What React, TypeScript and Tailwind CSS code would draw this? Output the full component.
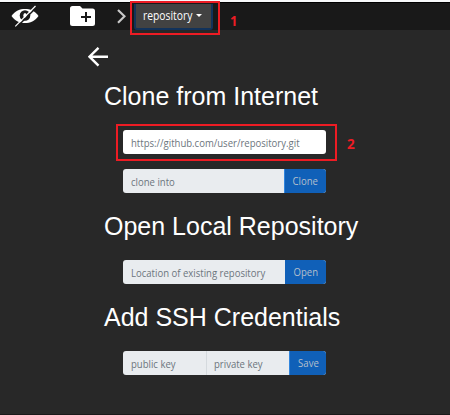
import type { ReactNode } from "react";

const ui = "font-['Open_Sans','Noto_Sans',sans-serif]";

function Heading({ children }: { children: ReactNode }) {
  return (
    <h2 className="h-[30px] whitespace-nowrap pl-[104px] font-['Liberation_Sans',Arial,sans-serif] text-[25px] leading-[30px] text-white">
      {children}
    </h2>
  );
}

function Group({ children }: { children: ReactNode }) {
  return (
    <div className="ml-[123px] flex h-6 w-[203px] overflow-hidden rounded-[3px] bg-[#e9ecef] text-[11.5px] leading-6 text-[#6c757d]">
      {children}
    </div>
  );
}

function Field({ className, children }: { className: string; children: ReactNode }) {
  return (
    <span className={`min-w-0 whitespace-nowrap leading-[25px] ${className}`}>
      <span className="inline-block origin-left scale-x-[0.83]">{children}</span>
    </span>
  );
}

function Action({ className, children }: { className: string; children: ReactNode }) {
  return (
    <button className={`flex shrink-0 justify-center whitespace-nowrap bg-[#1060b8] text-[#b4bfcb] ${className}`}>
      <span className="inline-block scale-x-[0.83]">{children}</span>
    </button>
  );
}

export default function App() {
  return (
    <div className={`relative h-[415px] w-[450px] overflow-hidden border-b border-[#191919] bg-[#282828] ${ui}`}>
      <div className="h-0.5 bg-[#f8f9fa]" />
      <header className="flex h-7 items-start border-t border-black bg-[#191919]">
        <svg className="ml-[10px] mt-0.5 h-[24px] w-[30px]" viewBox="0 0 30 24">
          <path d="M1.500 11C5 5.700 10 4 15 4s10 1.700 13.500 7C25 16.300 20 18 15 18S5 16.300 1.500 11Z" fill="#fff" />
          <circle cx="15" cy="10.500" r="5.300" fill="#191919" />
          <ellipse cx="15" cy="10.500" rx="1.700" ry="2.600" fill="#fff" />
          <path d="M6.800 22 26.800 2" stroke="#191919" strokeWidth="1.600" />
          <path d="M5.300 21.300 25.500 1" stroke="#fff" strokeWidth="1.200" />
        </svg>
        <svg className="ml-[30px] mt-[3px] h-[21px] w-[25px]" viewBox="0 0 25 21">
          <path d="M0 2.500Q0 0 2.500 0H10l2.500 2.500h10Q25 2.500 25 5v12.500Q25 20 22.500 20h-20Q0 20 0 17.500Z" fill="#fff" />
          <path d="M16 6v10M11 11h10" stroke="#191919" strokeWidth="2" />
        </svg>
        <svg className="ml-[22px] mt-[6px] h-[15px] w-[9px]" viewBox="0 0 9 15" fill="none">
          <path d="m1 1 6.500 6.300L1 13.700" stroke="#c9c9c9" strokeWidth="2.200" />
        </svg>
        <button className="ml-[8px] mt-px flex h-[26px] w-[79px] items-center rounded-b-[3px] border-2 border-t-0 border-[#12325a] bg-[#424242] pl-[7px] text-[12px] leading-6 text-white">
          <span className="w-[51px] whitespace-nowrap text-left">
            <span className="inline-block origin-left scale-x-[0.86]">repository</span>
          </span>
          <span className="mb-0.5 ml-[2px] border-x-[3px] border-t-[3px] border-x-transparent border-t-white" />
        </button>
      </header>

      <main>
        <svg className="ml-[88px] mt-[17px] h-[20px] w-5" viewBox="0 0 20 20" fill="none" stroke="#fff" strokeWidth="2.400">
          <path d="M10.500.800 1.500 9.700l9 9M1.500 9.700H20" />
        </svg>

        <div className="mt-[14px]"><Heading>Clone from Internet</Heading></div>
        <div className="mt-[19px]">
          <Group>
            <Field className="grow bg-white pl-2">https://github.com/user/repository.git</Field>
          </Group>
        </div>
        <div className="mt-[15px]">
          <Group>
            <Field className="grow pl-2">clone into</Field>
            <Action className="w-[42px] border-l border-[#3185dd]">Clone</Action>
          </Group>
        </div>

        <div className="mt-[18px]"><Heading>Open Local Repository</Heading></div>
        <div className="mt-[19px]">
          <Group>
            <Field className="grow pl-2">Location of existing repository</Field>
            <Action className="w-[41px]">Open</Action>
          </Group>
        </div>

        <div className="mt-[18px]"><Heading>Add SSH Credentials</Heading></div>
        <div className="mt-[19px]">
          <Group>
            <Field className="w-[83px] shrink-0 pl-2">public key</Field>
            <Field className="grow border-l border-[#d5dade] pl-[7px]">private key</Field>
            <Action className="w-[37px] border-l border-[#3185dd]">Save</Action>
          </Group>
        </div>
      </main>

      <div className="absolute left-[130px] top-px h-[34px] w-[90px] border-2 border-[#ed1c24]" />
      <span className="absolute left-[230px] top-[11px] origin-left scale-x-[0.86] text-[15px] font-bold leading-[18px] text-[#ed1c24]">1</span>
      <div className="absolute left-[116px] top-[124px] h-[37px] w-[221px] border-2 border-[#ed1c24]" />
      <span className="absolute left-[347px] top-[134px] origin-left scale-x-[0.9] text-[15px] font-bold leading-[18px] text-[#ed1c24]">2</span>
    </div>
  );
}
